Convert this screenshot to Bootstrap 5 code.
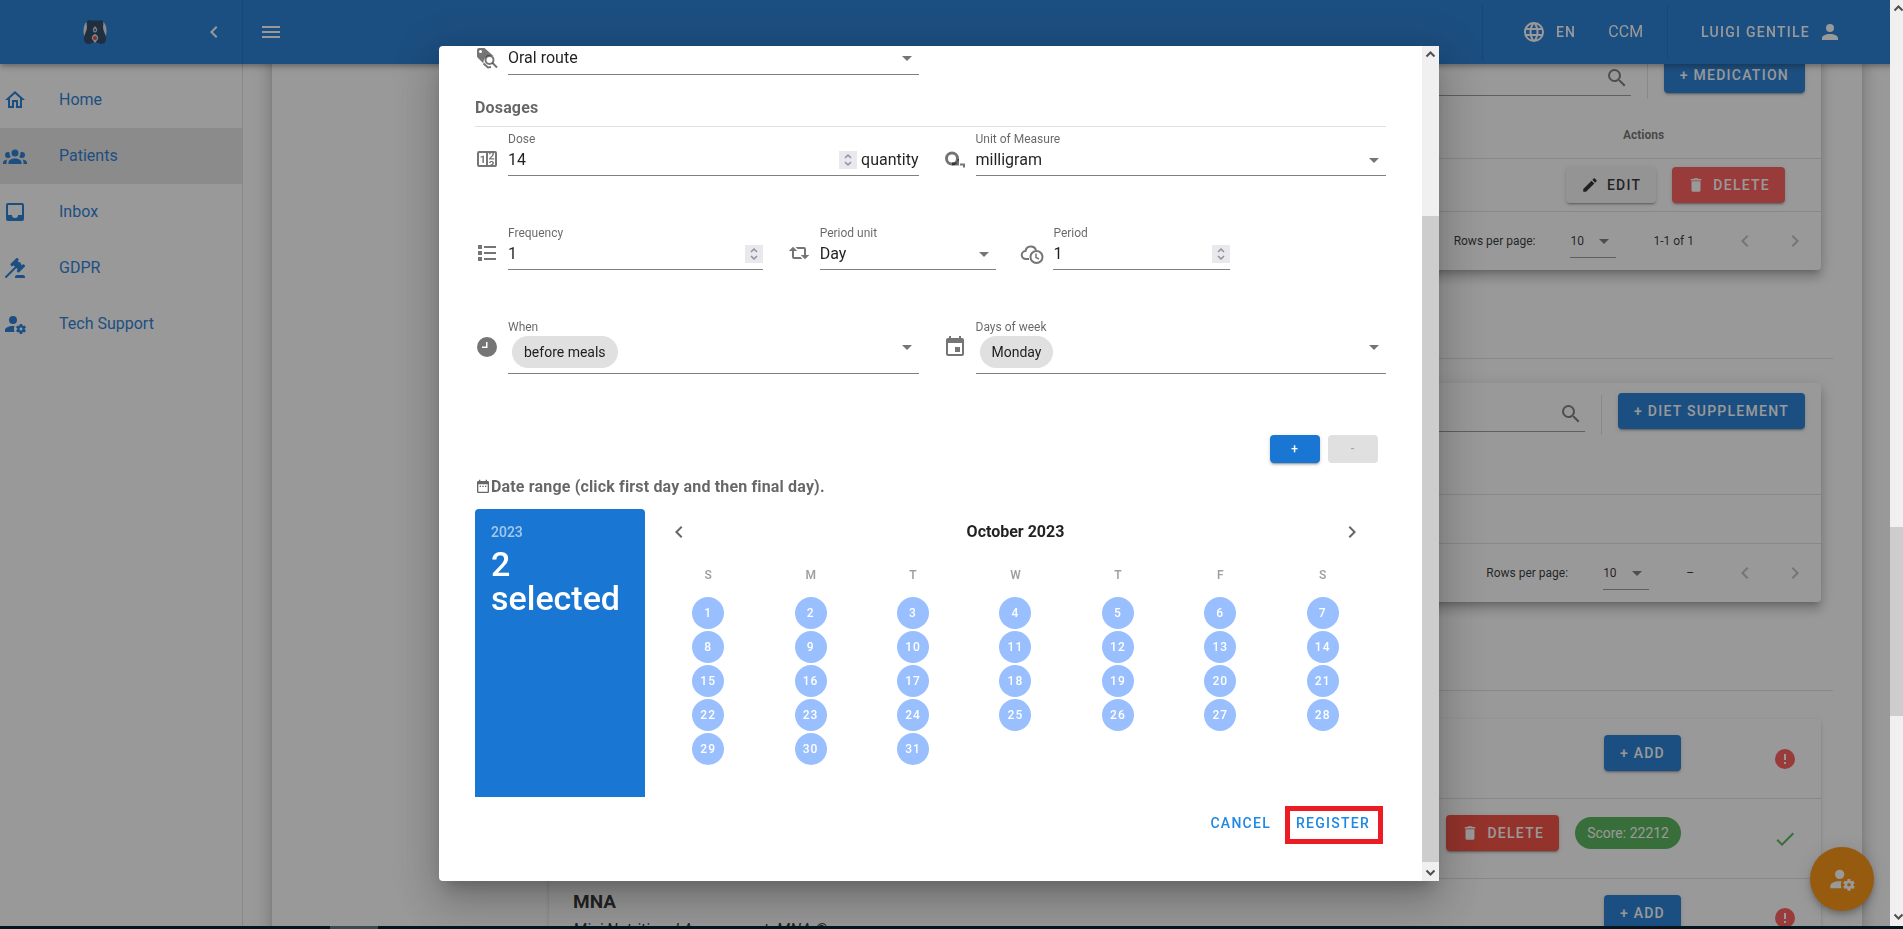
<!DOCTYPE html>
<html lang="en">
<head>
<meta charset="utf-8">
<meta name="viewport" content="width=device-width, initial-scale=1">
<title>Patients</title>
<link href="https://cdn.jsdelivr.net/npm/bootstrap@5.3.0/dist/css/bootstrap.min.css" rel="stylesheet">
<style>
:root{--blue:#1976d2;--line:rgba(0,0,0,.12);--soft:rgba(0,0,0,.6);--ink:rgba(0,0,0,.87)}
body{font-family:Roboto,sans-serif;font-size:16px;line-height:24px;color:var(--ink);background:#fff;height:100vh;overflow:hidden}
svg{fill:currentColor;display:block;flex:none}
.ico{width:24px;height:24px}
.ico18{width:18px;height:18px}
.ico28{width:28px;height:28px}
.edge{padding-right:13px}
.bad{color:#ff5252}.good{color:#4caf50}
/* app bar */
.appbar{height:64px;background:var(--blue);color:#fff;box-shadow:0 2px 4px -1px rgba(0,0,0,.2),0 4px 5px 0 rgba(0,0,0,.14),0 1px 10px 0 rgba(0,0,0,.12)}
.appbar .brandbox{width:243px;border-right:1px solid var(--line);padding-right:16px}
.appbar .home{padding-right:12px}
.appbar .logo{width:24px;height:26px}
.appbar .split{width:1px;height:56px;background:var(--line)}
.appbar .lang{margin-left:39px;gap:10px}
.appbar .org{margin:0 24px 0 32px}
.appbar .user{margin:0 48px 0 33px;gap:8px}
.plain{border:0;background:none;color:inherit;padding:0}
.caps{font-size:14px;line-height:20px;font-weight:500;letter-spacing:.09em;text-transform:uppercase}
/* navigation drawer */
.drawer{width:243px;border-right:1px solid var(--line);padding-top:72px;flex:none}
.drawer a{height:56px;padding-left:3px;gap:32px;color:var(--blue);text-decoration:none}
.drawer a.active{background:rgba(0,0,0,.1)}
/* page */
.sheet{margin:0 28px 0 29px;padding:47px 29px 0 265px;box-shadow:0 6px 6px -3px rgba(0,0,0,.2),0 10px 14px 1px rgba(0,0,0,.14),0 4px 18px 3px rgba(0,0,0,.12)}
.panel{margin:0 12px;border-radius:4px;background:#fff;box-shadow:0 5px 5px -3px rgba(0,0,0,.2),0 8px 10px 1px rgba(0,0,0,.14),0 3px 14px 2px rgba(0,0,0,.12)}
.panel.low{margin-top:28px;box-shadow:0 3px 1px -2px rgba(0,0,0,.2),0 2px 2px 0 rgba(0,0,0,.14),0 1px 5px 0 rgba(0,0,0,.12)}
.rule{margin:88px 0 24px;height:1px;background:var(--line)}
.tools{height:64px;padding:10px 16px 0 24px}
.tools .find{height:39px;border-bottom:1px solid rgba(0,0,0,.42);color:rgba(0,0,0,.54);padding:4px 2px 0 0}
.tools .find input,.ctl input{border:0;outline:0;background:none;padding:0;min-width:0;width:0;color:inherit}
.tools .bar{width:1px;height:40px;margin:2px 16px 0;background:var(--line)}
.vbtn{height:36px;border:0;border-radius:4px;padding:0 16px;display:inline-flex;align-items:center;justify-content:center;gap:8px;color:#fff;box-shadow:0 3px 1px -2px rgba(0,0,0,.2),0 2px 2px 0 rgba(0,0,0,.14),0 1px 5px 0 rgba(0,0,0,.12)}
.vbtn.pic{padding:0 15px}
.vblue{background:var(--blue)}.vred{background:#ff5252}.vdeep{background:#f44336}.vgrey{background:#f5f5f5;color:var(--ink)}
.grid{width:100%;font-size:12px;border-collapse:separate;border-spacing:0}
.grid th{height:48px;border-bottom:1px solid var(--line);text-align:center;color:var(--soft);padding:0}
.grid td{height:53px;border-bottom:1px solid var(--line);padding:0 36px 0 0}
.grid .act{width:355px}
.grid .none td{height:49px}
.pager{height:58px;font-size:12px;padding-right:8px;color:var(--ink)}
.pager .count{margin:0 33px 0 37px}
.pager .btnc{width:36px;height:36px;margin-left:14px;color:rgba(0,0,0,.26)}
.pager .count + .btnc{margin-left:0}
.rows{width:46px;height:33px;margin-left:35px;border-bottom:1px solid rgba(0,0,0,.42)}
select{appearance:none;border:0;outline:0;background:none;padding:0;color:inherit;min-width:0}
.arrow{color:rgba(0,0,0,.54)}
.test{height:80px;padding:16px 24px 0;border-bottom:1px solid var(--line)}
.test .state{height:48px;margin-left:92px}
.score{height:32px;border-radius:16px;background:#4caf50;color:#fff;font-size:14px;line-height:32px;padding:0 12px;margin:2px 0 0 16px}
.test.titled{padding-top:13px}
.test.titled .vbtn{margin-top:3px}
.test h3{font-size:19px;line-height:20px;font-weight:700;margin:0 0 6px}
.support{z-index:1035;width:64px;height:64px;border-radius:50%;background:#fb8c00;color:#fff;right:29px;bottom:18px;box-shadow:0 3px 5px -1px rgba(0,0,0,.2),0 6px 10px 0 rgba(0,0,0,.14),0 1px 18px 0 rgba(0,0,0,.12)}
.veil{background:rgba(33,33,33,.46);z-index:1040}
/* dialog */
.stage{z-index:1050;padding-right:25px;padding-bottom:2px}
.box{width:1000px;max-width:90%;height:calc(90vh - 1px);border-radius:4px 0 0 4px;background:#fff;overflow:hidden;box-shadow:0 11px 15px -7px rgba(0,0,0,.2),0 24px 38px 3px rgba(0,0,0,.14),0 9px 46px 8px rgba(0,0,0,.12)}
.box .inner{padding:0 36px;min-width:0}
.fld{gap:9px}
.fld > svg{color:rgba(0,0,0,.54);margin-top:15px}
.fld .lab{display:block;font-size:12px;line-height:14px;color:var(--soft)}
.ctl{height:30px;padding-bottom:1px;border-bottom:1px solid rgba(0,0,0,.5)}
.fld.first > svg{margin-top:0}
.fld.first .ctl{height:29px;padding-bottom:3px}
.ctl.tall{height:40px;padding:2px 0 5px}
.ctl.tall .arrow{margin-top:-10px}
.ctl input[type=number]{appearance:textfield;-moz-appearance:textfield}
.ctl input::-webkit-inner-spin-button{display:none}
.spin{width:18px;height:18px;background:#e9e9ed;color:#8f8f9d}
.chip{height:32px;border-radius:16px;background:#e0e0e0;font-size:14px;line-height:32px;padding:0 12px;margin-left:4px}
.sect{font-size:16px;line-height:24px;font-weight:700;letter-spacing:.01em;color:var(--soft);margin:0}
.dos{margin-top:21px;padding-bottom:6px;border-bottom:1px solid var(--line);margin-bottom:5px}
.gap50{margin-top:50px}
.pair{margin-top:61px}
.range{margin-top:12px}
.small2{height:28px;width:50px;font-size:12px;padding:0}
.small2:disabled{background:#e0e0e0;color:rgba(0,0,0,.26);box-shadow:none}
.picker{height:288px;margin-top:10px}
.pick-side{width:170px;flex:none;background:var(--blue);color:#fff;border-radius:4px 4px 0 0;padding:16px}
.pick-side .yr{font-size:14px;line-height:14px;font-weight:500;opacity:.6;margin-bottom:8px}
.pick-side .sel{font-size:34px;line-height:34px;font-weight:500}
.pick-head{height:46px;padding:0 16px}
.pick-head strong{font-size:16px;font-weight:700}
.btnc{display:flex;align-items:center;justify-content:center}
.pick-head .btnc{width:36px;height:36px;color:rgba(0,0,0,.6)}
.cal{width:calc(100% - 24px);margin:0 12px;table-layout:fixed;border-collapse:collapse;font-size:12px;text-align:center}
.cal th{height:41px;padding:0;font-weight:600;color:rgba(0,0,0,.38);text-align:center}
.cal td{height:34px;padding:0}
.cal button{display:block;width:32px;height:32px;margin:0 auto;border:0;border-radius:50%;padding:0;background:#99bfff;color:#fff;font-weight:500;letter-spacing:.09em}
.acts{margin:9px 3px 0 0;color:#1e88e5;gap:14px}
.acts button{height:38px;padding-bottom:3px}
.acts .hot{border:5px solid #ed1c24;padding:0 8px 3px 6px}
/* scroll tracks */
.track{width:17px;background:#f0f0f0;flex:none}
.track span{height:17px;color:#505050}
.thumb{background:#cdcdcd}
.upper{flex:153}.mid{flex:644}.lower{flex:2}
.pagetrack{width:13px;z-index:1060}
.pagetrack .upper{flex:511}.pagetrack .mid{flex:189}.pagetrack .lower{flex:192}
.taskbar{height:3px;background:#01161f;z-index:1070}
.taskbar i{display:block;width:48px;height:3px;margin-left:330px;background:#3b4a50}
</style>
</head>
<body>
<svg class="d-none" aria-hidden="true">
<symbol id="left" viewBox="0 0 24 24"><path d="M15.41,16.58L10.83,12L15.41,7.41L14,6L8,12L14,18L15.41,16.58Z"/></symbol>
<symbol id="right" viewBox="0 0 24 24"><path d="M8.59,16.58L13.17,12L8.59,7.41L10,6L16,12L10,18L8.59,16.58Z"/></symbol>
<symbol id="down" viewBox="0 0 24 24"><path d="M7,10L12,15L17,10H7Z"/></symbol>
<symbol id="magnify" viewBox="0 0 24 24"><path d="M9.5,3A6.5,6.5 0 0,1 16,9.5C16,11.11 15.41,12.59 14.44,13.73L14.71,14H15.5L20.5,19L19,20.5L14,15.5V14.71L13.73,14.44C12.59,15.41 11.11,16 9.5,16A6.5,6.5 0 0,1 3,9.5A6.5,6.5 0 0,1 9.5,3M9.5,5C7,5 5,7 5,9.5C5,12 7,14 9.5,14C12,14 14,12 14,9.5C14,7 12,5 9.5,5Z"/></symbol>
<symbol id="trash" viewBox="0 0 24 24"><path d="M19,4H15.5L14.5,3H9.5L8.5,4H5V6H19M6,19A2,2 0 0,0 8,21H16A2,2 0 0,0 18,19V7H6V19Z"/></symbol>
<symbol id="alert" viewBox="0 0 24 24"><path d="M13,13H11V7H13M13,17H11V15H13M12,2A10,10 0 0,0 2,12A10,10 0 0,0 12,22A10,10 0 0,0 22,12A10,10 0 0,0 12,2Z"/></symbol>
<symbol id="cog" viewBox="0 0 24 24"><path d="M10 4A4 4 0 0 0 6 8A4 4 0 0 0 10 12A4 4 0 0 0 14 8A4 4 0 0 0 10 4M17 12C16.87 12 16.76 12.09 16.74 12.21L16.55 13.53C16.25 13.66 15.96 13.82 15.7 14L14.46 13.5C14.35 13.5 14.22 13.5 14.15 13.63L13.15 15.36C13.09 15.47 13.11 15.6 13.21 15.68L14.27 16.5C14.25 16.67 14.24 16.83 14.24 17C14.24 17.17 14.25 17.33 14.27 17.5L13.21 18.32C13.12 18.4 13.09 18.53 13.15 18.64L14.15 20.37C14.21 20.5 14.34 20.5 14.46 20.5L15.7 20C15.96 20.18 16.24 20.35 16.55 20.47L16.74 21.79C16.76 21.91 16.86 22 17 22H19C19.11 22 19.22 21.91 19.24 21.79L19.43 20.47C19.73 20.34 20 20.18 20.27 20L21.5 20.5C21.63 20.5 21.76 20.5 21.83 20.37L22.83 18.64C22.89 18.53 22.86 18.4 22.77 18.32L21.7 17.5C21.72 17.33 21.74 17.17 21.74 17C21.74 16.83 21.73 16.67 21.7 16.5L22.76 15.68C22.85 15.6 22.88 15.47 22.82 15.36L21.82 13.63C21.76 13.5 21.63 13.5 21.5 13.5L20.27 14C20 13.82 19.73 13.65 19.42 13.53L19.23 12.21C19.22 12.09 19.11 12 19 12H17M10 14C5.58 14 2 15.79 2 18V20H11.68A7 7 0 0 1 11 17A7 7 0 0 1 11.64 14.09C11.11 14.03 10.56 14 10 14M18 15.5C18.83 15.5 19.5 16.17 19.5 17C19.5 17.83 18.83 18.5 18 18.5C17.16 18.5 16.5 17.83 16.5 17C16.5 16.17 17.17 15.5 18 15.5Z"/></symbol>
<symbol id="spin" viewBox="0 0 18 18"><path d="M6 7L9 4L12 7M6 11L9 14L12 11" fill="none" stroke="currentColor" stroke-width="1.5"/></symbol>
<symbol id="sup" viewBox="0 0 17 17"><path d="M4.500 10.500L8.500 6.500L12.500 10.500" fill="none" stroke="currentColor" stroke-width="2"/></symbol>
<symbol id="sdown" viewBox="0 0 17 17"><path d="M4.500 6.500L8.500 10.500L12.500 6.500" fill="none" stroke="currentColor" stroke-width="2"/></symbol>
</svg>

<header class="appbar fixed-top d-flex align-items-center edge">
  <div class="brandbox d-flex align-items-center h-100">
    <a href="#" class="home mx-auto" aria-label="Start page"><svg class="logo" viewBox="0 0 24 26"><ellipse cx="4" cy="12" rx="3.500" ry="8.500" fill="#e3e6ea"/><ellipse cx="20" cy="12" rx="3.500" ry="8.500" fill="#e3e6ea"/><path d="M5 1Q12 2 19 1Q21 3 20 8Q20 11 22 15Q25 21 21 24.500Q15 26 12 22Q9 26 3 24.500Q-1 21 2 15Q4 11 4 8Q3 3 5 1Z" fill="#1e3c5c"/><path d="M12 7Q15 10 14 12Q12 15 10 12Q9 10 12 7Z" fill="#b9cde0"/><circle cx="12" cy="11" r="1" fill="#1e3c5c"/><path d="M12 15Q16 17 15 20L12 24L9 20Q8 17 12 15Z" fill="#d6dde6"/><circle cx="12" cy="19" r="2" fill="#e53935"/></svg></a>
    <button class="plain" aria-label="Collapse menu"><svg class="ico"><use href="#left"/></svg></button>
  </div>
  <button class="plain ms-3" aria-label="Menu"><svg class="ico" viewBox="0 0 24 24"><path d="M3,6H21V8H3V6M3,11H21V13H3V11M3,16H21V18H3V16Z"/></svg></button>
  <div class="split ms-auto"></div>
  <button class="plain d-flex align-items-center caps lang"><svg class="ico" viewBox="0 0 24 24"><path d="M16.36,14C16.44,13.34 16.5,12.68 16.5,12C16.5,11.32 16.44,10.66 16.36,10H19.74C19.9,10.64 20,11.31 20,12C20,12.69 19.9,13.36 19.74,14M14.59,19.56C15.19,18.45 15.65,17.25 15.97,16H18.92C17.96,17.65 16.43,18.93 14.59,19.56M14.34,14H9.66C9.56,13.34 9.5,12.68 9.5,12C9.5,11.32 9.56,10.65 9.66,10H14.34C14.43,10.65 14.5,11.32 14.5,12C14.5,12.68 14.43,13.34 14.34,14M12,19.96C11.17,18.76 10.5,17.43 10.09,16H13.91C13.5,17.43 12.83,18.76 12,19.96M8,8H5.08C6.03,6.34 7.57,5.06 9.4,4.44C8.8,5.55 8.35,6.75 8,8M5.08,16H8C8.35,17.25 8.8,18.45 9.4,19.56C7.57,18.93 6.03,17.65 5.08,16M4.26,14C4.1,13.36 4,12.69 4,12C4,11.31 4.1,10.64 4.26,10H7.64C7.56,10.66 7.5,11.32 7.5,12C7.5,12.68 7.56,13.34 7.64,14M12,4.03C12.83,5.23 13.5,6.57 13.91,8H10.09C10.5,6.57 11.17,5.23 12,4.03M18.92,8H15.97C15.65,6.75 15.19,5.55 14.59,4.44C16.43,5.07 17.96,6.34 18.92,8M12,2C6.47,2 2,6.5 2,12A10,10 0 0,0 12,22A10,10 0 0,0 22,12A10,10 0 0,0 12,2Z"/></svg>EN</button>
  <span class="org">CCM</span>
  <div class="split"></div>
  <button class="plain d-flex align-items-center caps user">Luigi Gentile<svg class="ico" viewBox="0 0 24 24"><path d="M12,4A4,4 0 0,1 16,8A4,4 0 0,1 12,12A4,4 0 0,1 8,8A4,4 0 0,1 12,4M12,14C16.42,14 20,15.79 20,18V20H4V18C4,15.79 7.58,14 12,14Z"/></svg></button>
</header>

<div class="d-flex vh-100 edge">
  <nav class="drawer" aria-label="Main">
    <a href="#" class="d-flex align-items-center"><svg class="ico" viewBox="0 0 24 24"><path d="M12 5.690L17 10.190V18H15V12H9V18H7V10.190L12 5.690M12 3L2 12H5V20H11V14H13V20H19V12H22L12 3Z"/></svg>Home</a>
    <a href="#" class="d-flex align-items-center active"><svg class="ico" viewBox="0 0 24 24"><path d="M12,5.500A3.500,3.500 0 0,1 15.500,9A3.500,3.500 0 0,1 12,12.500A3.500,3.500 0 0,1 8.500,9A3.500,3.500 0 0,1 12,5.500M5,8C5.560,8 6.080,8.150 6.530,8.420C6.380,9.850 6.800,11.270 7.660,12.380C7.160,13.340 6.160,14 5,14A3,3 0 0,1 2,11A3,3 0 0,1 5,8M19,8A3,3 0 0,1 22,11A3,3 0 0,1 19,14C17.840,14 16.840,13.340 16.340,12.380C17.200,11.270 17.620,9.850 17.470,8.420C17.920,8.150 18.440,8 19,8M5.500,18.250C5.500,16.180 8.410,14.500 12,14.500C15.590,14.500 18.500,16.180 18.500,18.250V20H5.500V18.250M0,20V18.500C0,17.110 1.890,15.940 4.450,15.600C3.860,16.280 3.500,17.220 3.500,18.250V20H0M24,20H20.500V18.250C20.500,17.220 20.140,16.280 19.550,15.600C22.110,15.940 24,17.110 24,18.500V20Z"/></svg>Patients</a>
    <a href="#" class="d-flex align-items-center"><svg class="ico" viewBox="0 0 24 24"><path d="M19,15H15A3,3 0 0,1 12,18A3,3 0 0,1 9,15H5V5H19M19,3H5C3.890,3 3,3.900 3,5V19A2,2 0 0,0 5,21H19A2,2 0 0,0 21,19V5A2,2 0 0,0 19,3Z"/></svg>Inbox</a>
    <a href="#" class="d-flex align-items-center"><svg class="ico" viewBox="0 0 24 24"><path d="M2.300,20.280L11.900,10.680L10.500,9.260L9.780,9.970C9.390,10.360 8.760,10.360 8.370,9.970L7.660,9.260C7.270,8.870 7.270,8.240 7.660,7.850L13.320,2.190C13.710,1.800 14.340,1.800 14.730,2.190L15.440,2.900C15.830,3.290 15.830,3.920 15.440,4.310L14.730,5L16.150,6.430C16.540,6.040 17.170,6.040 17.560,6.430C17.950,6.820 17.950,7.460 17.560,7.850L18.970,9.260L19.680,8.550C20.070,8.160 20.710,8.160 21.100,8.550L21.800,9.260C22.190,9.650 22.190,10.290 21.800,10.680L16.150,16.330C15.760,16.720 15.120,16.720 14.730,16.330L14.030,15.630C13.630,15.240 13.630,14.600 14.030,14.210L14.730,13.500L13.320,12.090L3.710,21.700C3.320,22.090 2.690,22.090 2.300,21.700C1.910,21.310 1.910,20.670 2.300,20.280M20,19A2,2 0 0,1 22,21V22H12V21A2,2 0 0,1 14,19H20Z"/></svg>GDPR</a>
    <a href="#" class="d-flex align-items-center"><svg class="ico"><use href="#cog"/></svg>Tech Support</a>
  </nav>

  <main class="flex-grow-1 overflow-hidden">
    <div class="sheet vh-100">
      <section class="panel">
        <div class="tools d-flex">
          <div class="find d-flex align-items-center flex-grow-1"><input type="text" class="flex-grow-1" aria-label="Search medication"><svg class="ico"><use href="#magnify"/></svg></div>
          <div class="bar"></div>
          <button class="vbtn vblue caps">+ Medication</button>
        </div>
        <table class="grid">
          <thead><tr><th></th><th class="act">Actions</th></tr></thead>
          <tbody><tr><td></td><td><div class="d-flex justify-content-end gap-3">
            <button class="vbtn pic vgrey caps"><svg class="ico18" viewBox="0 0 24 24"><path d="M20.710,7.040C21.100,6.650 21.100,6 20.710,5.630L18.370,3.290C18,2.900 17.350,2.900 16.960,3.290L15.120,5.120L18.870,8.870M3,17.250V21H6.750L17.810,9.930L14.060,6.180L3,17.250Z"/></svg>Edit</button>
            <button class="vbtn pic vred caps"><svg class="ico18"><use href="#trash"/></svg>Delete</button>
          </div></td></tr></tbody>
        </table>
        <div class="pager d-flex align-items-center justify-content-end">
          <label for="rows1">Rows per page:</label>
          <div class="rows d-flex align-items-center"><select id="rows1" class="flex-grow-1"><option>10</option></select><svg class="ico arrow"><use href="#down"/></svg></div>
          <span class="count">1-1 of 1</span>
          <button class="plain btnc" aria-label="Previous page"><svg class="ico"><use href="#left"/></svg></button>
          <button class="plain btnc" aria-label="Next page"><svg class="ico"><use href="#right"/></svg></button>
        </div>
      </section>
      <div class="rule"></div>
      <section class="panel">
        <div class="tools d-flex">
          <div class="find d-flex align-items-center flex-grow-1"><input type="text" class="flex-grow-1" aria-label="Search diet supplement"><svg class="ico"><use href="#magnify"/></svg></div>
          <div class="bar"></div>
          <button class="vbtn vblue caps">+ Diet supplement</button>
        </div>
        <table class="grid">
          <thead><tr><th></th></tr></thead>
          <tbody class="none"><tr><td></td></tr></tbody>
        </table>
        <div class="pager d-flex align-items-center justify-content-end">
          <label for="rows2">Rows per page:</label>
          <div class="rows d-flex align-items-center"><select id="rows2" class="flex-grow-1"><option>10</option></select><svg class="ico arrow"><use href="#down"/></svg></div>
          <span class="count">–</span>
          <button class="plain btnc" aria-label="Previous page"><svg class="ico"><use href="#left"/></svg></button>
          <button class="plain btnc" aria-label="Next page"><svg class="ico"><use href="#right"/></svg></button>
        </div>
      </section>
      <div class="rule"></div>
      <section class="panel low">
        <div class="test d-flex align-items-start justify-content-end">
          <button class="vbtn vblue caps">+ Add</button>
          <div class="state d-flex align-items-center bad"><svg class="ico"><use href="#alert"/></svg></div>
        </div>
        <div class="test d-flex align-items-start justify-content-end">
          <button class="vbtn pic vdeep caps"><svg class="ico18"><use href="#trash"/></svg>Delete</button>
          <span class="score">Score: 22212</span>
          <div class="state d-flex align-items-center good"><svg class="ico" viewBox="0 0 24 24"><path d="M21,7L9,19L3.500,13.500L4.910,12.090L9,16.170L19.590,5.590L21,7Z"/></svg></div>
        </div>
        <div class="test titled d-flex align-items-start">
          <div class="flex-grow-1"><h3>MNA</h3><em>Mini Nutritional Assessment: MNA ®</em></div>
          <button class="vbtn vblue caps">+ Add</button>
          <div class="state d-flex align-items-center pt-1 bad"><svg class="ico"><use href="#alert"/></svg></div>
        </div>
      </section>
    </div>
  </main>
</div>
<button class="support plain position-fixed d-flex align-items-center justify-content-center" aria-label="Tech support"><svg class="ico28"><use href="#cog"/></svg></button>

<div class="veil position-fixed top-0 start-0 w-100 h-100"></div>
<div class="stage position-fixed top-0 start-0 w-100 h-100 d-flex align-items-center justify-content-center">
  <form class="box d-flex" role="dialog" aria-label="Medication" onsubmit="return false">
    <div class="inner flex-grow-1">
      <div class="row gx-4">
        <div class="col-6"><div class="fld first d-flex">
          <svg class="ico" viewBox="0 0 24 24"><path d="M4 2H9.500L19 10.500A7 7 0 0 0 8.500 17.500L2.500 11.500Q2 11 2 10V4Q2 2 4 2Z"/><circle cx="5.500" cy="5.500" r="1.500" fill="#fff"/><circle cx="14.500" cy="14" r="4" fill="none" stroke="currentColor" stroke-width="2"/><path d="M17.500 17L22 21.500M8.500 17.500L13 21.500L16 21" fill="none" stroke="currentColor" stroke-width="2"/></svg>
          <div class="ctl flex-grow-1 d-flex align-items-center"><select class="flex-grow-1" aria-label="Route"><option>Oral route</option></select><svg class="ico arrow"><use href="#down"/></svg></div>
        </div></div>
      </div>
      <h2 class="sect dos">Dosages</h2>
      <div class="row gx-4">
        <div class="col-6"><div class="fld d-flex">
          <svg class="ico" viewBox="0 0 24 24"><path d="M4,4H20A2,2 0 0,1 22,6V18A2,2 0 0,1 20,20H4A2,2 0 0,1 2,18V6A2,2 0 0,1 4,4M4,6V18H11V6H4M20,18V6H18.760C19,6.540 18.950,7.070 18.950,7.130C18.880,7.800 18.410,8.500 18.240,8.750L15.910,11.300L19.230,11.280L19.240,12.500L14.040,12.470L14,11.470C14,11.470 17.050,8.240 17.200,7.950C17.340,7.670 17.910,6 16.500,6C15.270,6.050 15.410,7.300 15.410,7.300L13.870,7.310C13.870,7.310 13.880,6.650 14.250,6H13V18H15.580L15.570,17.140L16.540,17.130C16.540,17.130 17.450,16.970 17.460,16.080C17.500,15.080 16.650,15.080 16.500,15.080C16.370,15.080 15.430,15.130 15.430,15.950H13.910C13.910,15.950 13.950,13.890 16.500,13.890C19.100,13.890 18.960,15.910 18.960,15.910C18.960,15.910 19,17.160 17.850,17.630L18.370,18H20M8.920,16H7.420V10.200L5.620,10.760V9.530L8.760,8.410H8.920V16Z"/></svg>
          <div class="flex-grow-1"><label class="lab" for="dose">Dose</label>
          <div class="ctl d-flex align-items-center"><input id="dose" type="number" value="14" class="flex-grow-1"><svg class="spin me-1"><use href="#spin"/></svg><span>quantity</span></div></div>
        </div></div>
        <div class="col-6"><div class="fld d-flex">
          <svg class="ico" viewBox="0 0 24 24"><circle cx="9" cy="11.500" r="5.500" fill="none" stroke="currentColor" stroke-width="3"/><path d="M9 15.500H14.500V12H16V18.500H9ZM17 16.500H22V20.500H20V18.500H17Z"/></svg>
          <div class="flex-grow-1"><label class="lab" for="unit">Unit of Measure</label>
          <div class="ctl d-flex align-items-center"><select id="unit" class="flex-grow-1"><option>milligram</option></select><svg class="ico arrow"><use href="#down"/></svg></div></div>
        </div></div>
      </div>
      <div class="row gx-4 gap50">
        <div class="col-4"><div class="fld d-flex">
          <svg class="ico" viewBox="0 0 24 24"><path d="M3,4H7V8H3V4M9,5V7H21V5H9M3,10H7V14H3V10M9,11V13H21V11H9M3,16H7V20H3V16M9,17V19H21V17H9"/></svg>
          <div class="flex-grow-1"><label class="lab" for="freq">Frequency</label>
          <div class="ctl d-flex align-items-center"><input id="freq" type="number" value="1" class="flex-grow-1"><svg class="spin"><use href="#spin"/></svg></div></div>
        </div></div>
        <div class="col-3"><div class="fld d-flex">
          <svg class="ico" viewBox="0 0 24 24"><path d="M6,5.750L10.250,10H7V16H13.500L15.500,18H7A2,2 0 0,1 5,16V10H1.750L6,5.750M18,18.250L13.750,14H17V8H10.500L8.500,6H17A2,2 0 0,1 19,8V14H22.250L18,18.250Z"/></svg>
          <div class="flex-grow-1"><label class="lab" for="punit">Period unit</label>
          <div class="ctl d-flex align-items-center"><select id="punit" class="flex-grow-1"><option>Day</option></select><svg class="ico arrow"><use href="#down"/></svg></div></div>
        </div></div>
        <div class="col-3"><div class="fld d-flex">
          <svg class="ico" viewBox="0 0 24 24"><path d="M9 18H6A4 4 0 0 1 5.500 10A5.500 5.500 0 0 1 16 9" fill="none" stroke="currentColor" stroke-width="2"/><circle cx="16.500" cy="16" r="6" fill="none" stroke="currentColor" stroke-width="2"/><path d="M16 12.500V16.500L19 18" fill="none" stroke="currentColor" stroke-width="1.500"/></svg>
          <div class="flex-grow-1"><label class="lab" for="period">Period</label>
          <div class="ctl d-flex align-items-center"><input id="period" type="number" value="1" class="flex-grow-1"><svg class="spin"><use href="#spin"/></svg></div></div>
        </div></div>
      </div>
      <div class="row gx-4 gap50">
        <div class="col-6"><div class="fld d-flex">
          <svg class="ico" viewBox="0 0 24 24"><path d="M12,2A10,10 0 0,0 2,12A10,10 0 0,0 12,22A10,10 0 0,0 22,12A10,10 0 0,0 12,2M12.500 13H7V11.500H11V7H12.500V13Z"/></svg>
          <div class="flex-grow-1"><span class="lab">When</span>
          <div class="ctl tall d-flex align-items-center"><span class="chip">before meals</span><svg class="ico arrow ms-auto"><use href="#down"/></svg></div></div>
        </div></div>
        <div class="col-6"><div class="fld d-flex">
          <svg class="ico" viewBox="0 0 24 24"><path d="M19,19H5V8H19M16,1V3H8V1H6V3H5C3.890,3 3,3.890 3,5V19A2,2 0 0,0 5,21H19A2,2 0 0,0 21,19V5C21,3.890 20.100,3 19,3H18V1M17,12H12V17H17V12Z"/></svg>
          <div class="flex-grow-1"><span class="lab">Days of week</span>
          <div class="ctl tall d-flex align-items-center"><span class="chip">Monday</span><svg class="ico arrow ms-auto"><use href="#down"/></svg></div></div>
        </div></div>
      </div>
      <div class="d-flex justify-content-end gap-2 pe-2 pair">
        <button type="button" class="vbtn vblue caps small2">+</button>
        <button type="button" class="vbtn caps small2" disabled>-</button>
      </div>
      <h2 class="sect range d-flex align-items-center"><svg width="16" height="16" viewBox="0 0 24 24"><path d="M9,10H7V12H9V10M13,10H11V12H13V10M17,10H15V12H17V10M19,3H18V1H16V3H8V1H6V3H5C3.890,3 3,3.900 3,5V19A2,2 0 0,0 5,21H19A2,2 0 0,0 21,19V5A2,2 0 0,0 19,3M19,19H5V8H19V19Z"/></svg>Date range (click first day and then final day).</h2>
      <div class="picker d-flex">
        <div class="pick-side"><div class="yr">2023</div><div class="sel">2 selected</div></div>
        <div class="flex-grow-1">
          <div class="pick-head d-flex align-items-center justify-content-between">
            <button type="button" class="plain btnc" aria-label="Previous month"><svg class="ico"><use href="#left"/></svg></button>
            <strong>October 2023</strong>
            <button type="button" class="plain btnc" aria-label="Next month"><svg class="ico"><use href="#right"/></svg></button>
          </div>
          <table class="cal">
            <thead><tr><th>S</th><th>M</th><th>T</th><th>W</th><th>T</th><th>F</th><th>S</th></tr></thead>
            <tbody id="days"></tbody>
          </table>
        </div>
      </div>
      <div class="acts d-flex justify-content-end">
        <button type="button" class="plain caps">Cancel</button>
        <button type="submit" class="plain caps hot">Register</button>
      </div>
    </div>
    <div class="track d-flex flex-column" aria-hidden="true">
      <span><svg width="17" height="17"><use href="#sup"/></svg></span>
      <div class="upper"></div><div class="thumb mid"></div><div class="lower"></div>
      <span><svg width="17" height="17"><use href="#sdown"/></svg></span>
    </div>
  </form>
</div>

<div class="track pagetrack position-fixed top-0 end-0 h-100 d-flex flex-column overflow-hidden" aria-hidden="true">
  <span><svg width="17" height="17"><use href="#sup"/></svg></span>
  <div class="upper"></div><div class="thumb mid"></div><div class="lower"></div>
  <span class="mb-1"><svg width="17" height="17"><use href="#sdown"/></svg></span>
</div>
<div class="taskbar fixed-bottom"><i></i></div>
<script>
const body=document.getElementById('days');
for(let d=1;d<=31;d++){
  if(d%7===1)body.insertRow();
  body.lastElementChild.insertCell().innerHTML='<button type="button">'+d+'</button>';
}
</script>
<script src="https://cdn.jsdelivr.net/npm/bootstrap@5.3.0/dist/js/bootstrap.bundle.min.js"></script>
</body>
</html>
